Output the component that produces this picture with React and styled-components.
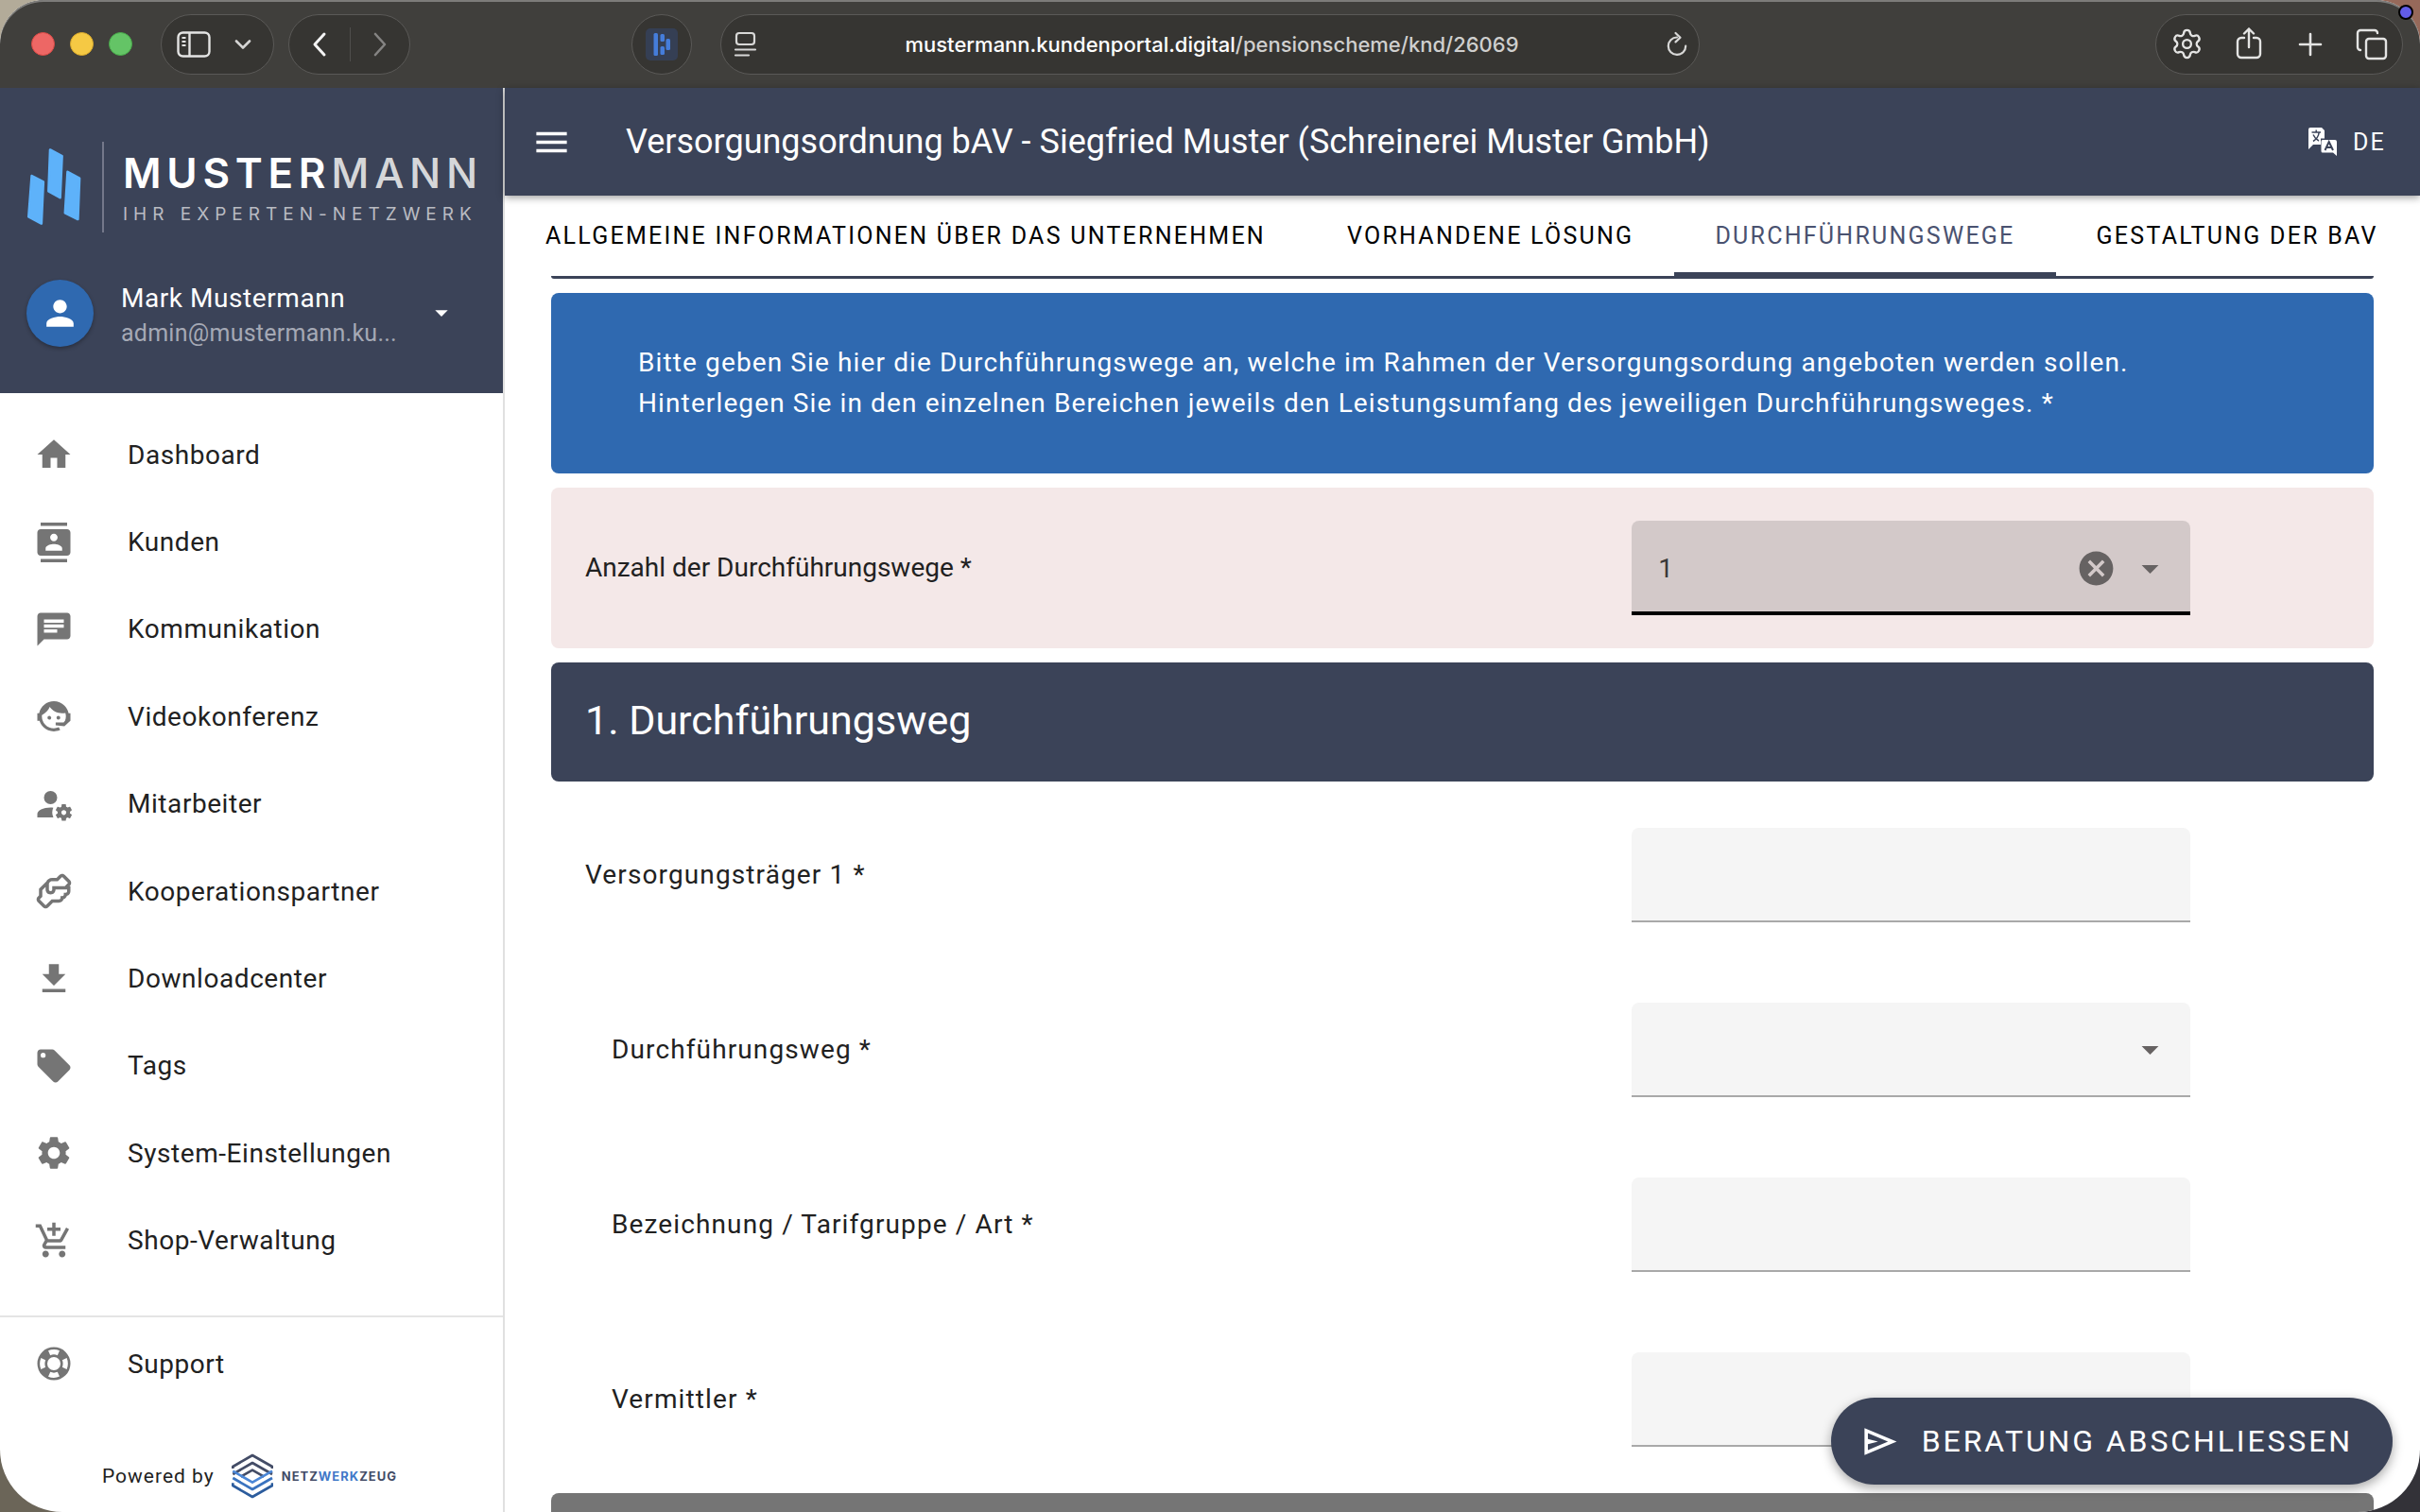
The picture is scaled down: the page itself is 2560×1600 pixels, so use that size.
import React, { useState } from "react";
import styled, { createGlobalStyle } from "styled-components";
import {
  MdAddShoppingCart,
  MdArrowDropDown,
  MdCancel,
  MdChat,
  MdContacts,
  MdHome,
  MdMenu,
  MdPerson,
  MdSettings,
} from "react-icons/md";
import { Copy, Settings } from "lucide-react";

const Icon = ({ d }) => (
  <svg viewBox="0 0 24 24" fill="currentColor" aria-hidden="true">
    <path d={d} />
  </svg>
);

const paths = {
  agent:
    "M18.72,14.76C19.07,13.91 19.26,13 19.26,12C19.26,11.28 19.15,10.59 18.96,9.95C18.31,10.1 17.63,10.18 16.92,10.18C13.86,10.18 11.15,8.67 9.5,6.34C8.61,8.5 6.91,10.26 4.77,11.22C4.73,11.47 4.73,11.74 4.73,12A7.27,7.27 0 0,0 12,19.27C13.05,19.27 14.06,19.04 14.97,18.63C15.54,19.72 15.8,20.26 15.78,20.26C14.14,20.81 12.87,21.08 12,21.08C9.58,21.08 7.27,20.13 5.57,18.42C4.53,17.38 3.76,16.11 3.33,14.73H2V10.18H3.09C3.93,6.04 7.6,2.92 12,2.92C14.4,2.92 16.71,3.87 18.42,5.58C19.69,6.84 20.54,8.45 20.89,10.18H22V14.67H22V14.69L22,14.73H21.94L18.38,18L13.08,17.4V15.73H17.91L18.72,14.76M9.27,11.77C9.57,11.77 9.86,11.89 10.07,12.11C10.28,12.32 10.4,12.61 10.4,12.91C10.4,13.21 10.28,13.5 10.07,13.71C9.86,13.92 9.57,14.04 9.27,14.04C8.64,14.04 8.13,13.54 8.13,12.91C8.13,12.28 8.64,11.77 9.27,11.77M14.72,11.77C15.35,11.77 15.85,12.28 15.85,12.91C15.85,13.54 15.35,14.04 14.72,14.04C14.09,14.04 13.58,13.54 13.58,12.91A1.14,1.14 0 0,1 14.72,11.77Z",
  accountCog:
    "M10 4A4 4 0 0 0 6 8A4 4 0 0 0 10 12A4 4 0 0 0 14 8A4 4 0 0 0 10 4M17 12C16.87 12 16.76 12.09 16.74 12.21L16.55 13.53C16.25 13.66 15.96 13.82 15.7 14L14.46 13.5C14.35 13.5 14.22 13.5 14.15 13.63L13.15 15.36C13.09 15.47 13.11 15.6 13.21 15.68L14.27 16.5C14.25 16.67 14.24 16.83 14.24 17C14.24 17.17 14.25 17.33 14.27 17.5L13.21 18.32C13.12 18.4 13.09 18.53 13.15 18.64L14.15 20.37C14.21 20.5 14.34 20.5 14.46 20.5L15.7 20C15.96 20.18 16.24 20.35 16.55 20.47L16.74 21.79C16.76 21.91 16.86 22 17 22H19C19.11 22 19.22 21.91 19.24 21.79L19.43 20.47C19.73 20.34 20 20.18 20.27 20L21.5 20.5C21.63 20.5 21.76 20.5 21.83 20.37L22.83 18.64C22.89 18.53 22.86 18.4 22.77 18.32L21.7 17.5C21.72 17.33 21.74 17.17 21.74 17C21.74 16.83 21.73 16.67 21.7 16.5L22.76 15.68C22.85 15.6 22.88 15.47 22.82 15.36L21.82 13.63C21.76 13.5 21.63 13.5 21.5 13.5L20.27 14C20 13.82 19.73 13.65 19.42 13.53L19.23 12.21C19.22 12.09 19.11 12 19 12H17M10 14C5.58 14 2 15.79 2 18V20H11.68A7 7 0 0 1 11 17A7 7 0 0 1 11.64 14.09C11.11 14.03 10.56 14 10 14M18 15.5C18.83 15.5 19.5 16.17 19.5 17C19.5 17.83 18.83 18.5 18 18.5C17.16 18.5 16.5 17.83 16.5 17C16.5 16.17 17.17 15.5 18 15.5Z",
  handshake:
    "M21.71 8.71C22.96 7.46 22.39 6 21.71 5.29L18.71 2.29C17.45 1.04 16 1.61 15.29 2.29L13.59 4H11C9.1 4 8 5 7.44 6.15L3 10.59V14.59L2.29 15.29C1.04 16.55 1.61 18 2.29 18.71L5.29 21.71C5.83 22.25 6.41 22.45 6.96 22.45C7.67 22.45 8.32 22.1 8.71 21.71L11.41 19H15C16.7 19 17.56 17.94 17.87 16.9C19 16.6 19.62 15.74 19.87 14.9C21.42 14.5 22 13.03 22 12V9H21.41L21.71 8.71M20 12C20 12.45 19.81 13 19 13L18 13L18 14C18 14.45 17.81 15 17 15L16 15L16 16C16 16.45 15.81 17 15 17H10.59L7.31 20.28C7 20.57 6.82 20.4 6.71 20.29L3.72 17.31C3.43 17 3.6 16.82 3.71 16.71L5 15.41V11.41L7 9.41V11C7 12.21 7.8 14 10 14S13 12.21 13 11H20V12M20.29 7.29L18.59 9H11V11C11 11.45 10.81 12 10 12S9 11.45 9 11V8C9 7.54 9.17 6 11 6H14.41L16.69 3.72C17 3.43 17.18 3.6 17.29 3.71L20.28 6.69C20.57 7 20.4 7.18 20.29 7.29Z",
  download: "M5,20H19V18H5M19,9H15V3H9V9H5L12,16L19,9Z",
  tag: "M5.5,7A1.5,1.5 0 0,1 4,5.5A1.5,1.5 0 0,1 5.5,4A1.5,1.5 0 0,1 7,5.5A1.5,1.5 0 0,1 5.5,7M21.41,11.58L12.41,2.58C12.05,2.22 11.55,2 11,2H4C2.89,2 2,2.89 2,4V11C2,11.55 2.22,12.05 2.59,12.41L11.58,21.41C11.95,21.77 12.45,22 13,22C13.55,22 14.05,21.77 14.41,21.41L21.41,14.41C21.78,14.05 22,13.55 22,13C22,12.44 21.77,11.94 21.41,11.58Z",
  lifebuoy:
    "M19.79,15.41C20.74,13.24 20.74,10.75 19.79,8.59L17.05,9.83C17.65,11.21 17.65,12.78 17.06,14.17L19.79,15.41M15.42,4.21C13.25,3.26 10.76,3.26 8.59,4.21L9.83,6.94C11.22,6.35 12.79,6.35 14.18,6.95L15.42,4.21M4.21,8.58C3.26,10.76 3.26,13.24 4.21,15.42L6.95,14.17C6.35,12.79 6.35,11.21 6.95,9.82L4.21,8.58M8.59,19.79C10.76,20.74 13.25,20.74 15.42,19.78L14.18,17.05C12.8,17.65 11.22,17.65 9.84,17.06L8.59,19.79M12,2A10,10 0 0,1 22,12A10,10 0 0,1 12,22A10,10 0 0,1 2,12A10,10 0 0,1 12,2M12,8A4,4 0 0,0 8,12A4,4 0 0,0 12,16A4,4 0 0,0 16,12A4,4 0 0,0 12,8Z",
  send: "M3 20V4L22 12L3 20M5 17L16.85 12L5 7V10.5L11 12L5 13.5V17Z",
};

const navItems = [
  { label: "Dashboard", icon: <MdHome /> },
  { label: "Kunden", icon: <MdContacts /> },
  { label: "Kommunikation", icon: <MdChat /> },
  { label: "Videokonferenz", icon: <Icon d={paths.agent} /> },
  { label: "Mitarbeiter", icon: <Icon d={paths.accountCog} /> },
  { label: "Kooperationspartner", icon: <Icon d={paths.handshake} /> },
  { label: "Downloadcenter", icon: <Icon d={paths.download} /> },
  { label: "Tags", icon: <Icon d={paths.tag} /> },
  { label: "System-Einstellungen", icon: <MdSettings /> },
  { label: "Shop-Verwaltung", icon: <MdAddShoppingCart /> },
];

const tabs = [
  "Allgemeine Informationen über das Unternehmen",
  "Vorhandene Lösung",
  "Durchführungswege",
  "Gestaltung der bAV",
];

const fields = [
  { id: "traeger", label: "Versorgungsträger 1 *" },
  { id: "weg", label: "Durchführungsweg *", indent: true, select: true },
  { id: "tarif", label: "Bezeichnung / Tarifgruppe / Art *", indent: true },
  { id: "vermittler", label: "Vermittler *", indent: true },
];

const BrowserBar = () => (
  <Bar>
    <BarSide>
      <Lights>
        <Light $color="#ed6765" $ring="#d94a46" />
        <Light $color="#f5c944" $ring="#d9a92c" />
        <Light $color="#64c466" $ring="#48a94a" />
      </Lights>
      <Pill>
        <PillButton $width={68} aria-label="Seitenleiste">
          <svg width="36" height="28" viewBox="0 0 36 28" fill="none" stroke="#e4e4e3" strokeWidth="2.4">
            <rect x="1.5" y="1.5" width="33" height="25" rx="5" />
            <path d="M13.5 1.5v25" />
            <path d="M5.5 7h4M5.5 11h4M5.5 15h4" strokeWidth="1.8" />
          </svg>
        </PillButton>
        <PillButton $width={50} aria-label="Tabgruppen">
          <svg width="36" height="28" viewBox="0 0 36 28" fill="none" stroke="#d5d5d4" strokeWidth="2.6" strokeLinecap="round" strokeLinejoin="round">
            <path d="M4 10.5l7 7 7-7" />
          </svg>
        </PillButton>
      </Pill>
      <Pill>
        <PillButton $width={64} aria-label="Zurück">
          <svg width="16" height="28" viewBox="0 0 16 28" fill="none" stroke="#f4f4f4" strokeWidth="3" strokeLinecap="round" strokeLinejoin="round">
            <path d="M13 3L3 14l10 11" />
          </svg>
        </PillButton>
        <PillDivider />
        <PillButton $width={62} aria-label="Vorwärts">
          <svg width="16" height="28" viewBox="0 0 16 28" fill="none" stroke="#858483" strokeWidth="2.6" strokeLinecap="round" strokeLinejoin="round">
            <path d="M3 3l10 11L3 25" />
          </svg>
        </PillButton>
      </Pill>
      <ExtensionPill>
        <PillButton $width={62} aria-label="Erweiterung">
          <svg width="34" height="34" viewBox="0 0 34 34">
            <rect width="34" height="34" rx="5" fill="#353f54" />
            <g fill="#457ddb">
              <rect x="8.5" y="5" width="4.5" height="24" rx="1.5" />
              <rect x="15.5" y="6" width="4.5" height="8" rx="1.5" />
              <rect x="15.5" y="19" width="4.5" height="9" rx="1.5" />
              <rect x="21.5" y="11" width="4.5" height="12" rx="1.5" />
            </g>
          </svg>
        </PillButton>
      </ExtensionPill>
    </BarSide>
    <AddressPill>
      <svg width="26" height="28" viewBox="0 0 26 28" fill="none" stroke="#d8d8d7" strokeWidth="2.2" strokeLinecap="round">
        <rect x="3" y="2" width="19" height="12" rx="3" />
        <path d="M2 19.5h21M2 25.5h14" />
      </svg>
      <Address>
        mustermann.kundenportal.digital<span>/pensionscheme/knd/26069</span>
      </Address>
      <svg width="24" height="28" viewBox="0 0 24 28" fill="none" stroke="#d8d8d7" strokeWidth="2.2" strokeLinecap="round" strokeLinejoin="round">
        <path d="M12 6.5A9.2 9.2 0 1 0 21.2 15.7" />
        <path d="M10.5 2l5 4.7-5 4.7" />
      </svg>
    </AddressPill>
    <BarSide>
      <ToolsPill>
        <PillButton $width={65} aria-label="Einstellungen">
          <Settings size={35} strokeWidth={1.6} />
        </PillButton>
        <PillButton $width={65} aria-label="Teilen">
          <svg width="28" height="36" viewBox="0 0 28 36" fill="none" stroke="currentColor" strokeWidth="2.4" strokeLinecap="round" strokeLinejoin="round">
            <path d="M9 11H6a4 4 0 0 0-4 4v13a4 4 0 0 0 4 4h16a4 4 0 0 0 4-4V15a4 4 0 0 0-4-4h-3" />
            <path d="M14 21V1.5M9 6.5l5-5 5 5" />
          </svg>
        </PillButton>
        <PillButton $width={65} aria-label="Neuer Tab">
          <svg width="26" height="26" viewBox="0 0 26 26" fill="none" stroke="currentColor" strokeWidth="2.6" strokeLinecap="round">
            <path d="M13 2v22M2 13h22" />
          </svg>
        </PillButton>
        <PillButton $width={65} aria-label="Tabübersicht">
          <Copy size={36} strokeWidth={1.6} />
        </PillButton>
      </ToolsPill>
    </BarSide>
  </Bar>
);

const Sidebar = () => (
  <Aside>
    <Profile>
      <Brand>
        <svg width="58" height="84" viewBox="52 76 176 252" fill="#5eb2fa" stroke="#5eb2fa" strokeWidth="8" strokeLinejoin="round">
          <path d="M69 166L106 185L100 319L59 297Z" />
          <path d="M128 82L166 102L160 236L123 215Z" />
          <path d="M184 153L222 174L217 305L176 285Z" />
        </svg>
        <BrandText>
          <BrandName>
            MUSTER<span>MANN</span>
          </BrandName>
          <BrandClaim>IHR EXPERTEN-NETZWERK</BrandClaim>
        </BrandText>
      </Brand>
      <Account>
        <Avatar>
          <MdPerson />
        </Avatar>
        <AccountText>
          <AccountName>Mark Mustermann</AccountName>
          <AccountMail>admin@mustermann.ku...</AccountMail>
        </AccountText>
        <MdArrowDropDown />
      </Account>
    </Profile>
    <Nav>
      {navItems.map(({ label, icon }) => (
        <NavLink href="#" key={label}>
          {icon}
          {label}
        </NavLink>
      ))}
    </Nav>
    <AsideFooter>
      <NavLink href="#">
        <Icon d={paths.lifebuoy} />
        Support
      </NavLink>
      <Powered>
        Powered by
        <svg width="44" height="48" viewBox="-1 -1 132 142" fill="none" strokeWidth="8" strokeLinejoin="round">
          <path d="M3 46V40L65 4L128 40V46" stroke="#434c66" />
          <path d="M3 64L65 28L128 64" stroke="#434c66" />
          <path d="M28 72L65 51L102 72" stroke="#434c66" />
          <path d="M3 54L65 90L128 54" stroke="#4a86d6" />
          <path d="M3 76L65 112L128 76" stroke="#3a73bf" />
          <path d="M3 92V100L65 136L128 100V92" stroke="#2c5c9d" />
        </svg>
        <PoweredName>
          NETZ<span>WERK</span>ZEUG
        </PoweredName>
      </Powered>
    </AsideFooter>
  </Aside>
);

const App = () => {
  const [activeTab, setActiveTab] = useState(2);
  const [count, setCount] = useState("1");

  return (
    <Desktop>
      <GlobalStyle />
      <Window>
        <BrowserBar />
        <Page>
          <Sidebar />
          <Main>
            <Toolbar>
              <IconButton aria-label="Menü">
                <MdMenu />
              </IconButton>
              <Title>Versorgungsordnung bAV - Siegfried Muster (Schreinerei Muster GmbH)</Title>
              <Language>
                <svg viewBox="0 0 32 32" width="32" height="32" aria-hidden="true">
                  <path fill="#fff" d="M3 1H15L18 4V12.5H14V19H6L1 24V3Q1 1 3 1Z" />
                  <path fill="#fff" d="M16 14H29Q31 14 31 16V31L27 27.5H16Q14.5 27.5 14.5 26V16Q14.5 14 16 14Z" />
                  <g fill="none" stroke="#3b4358" strokeWidth="1.5">
                    <path d="M4.5 6H14M9.2 3.5V6M6 15.5Q11.5 12 12.2 6M6 8.5Q8 13 12 15" />
                    <path d="M18.5 25L22.7 16L27 25M20 22H25.5" strokeWidth="2" />
                  </g>
                </svg>
                DE
              </Language>
            </Toolbar>
            <Tabs role="tablist">
              {tabs.map((tab, i) => (
                <Tab
                  key={tab}
                  role="tab"
                  aria-selected={i === activeTab}
                  $active={i === activeTab}
                  onClick={() => setActiveTab(i)}
                >
                  {tab}
                </Tab>
              ))}
            </Tabs>
            <Content>
              <CardEdge />
              <Notice>
                Bitte geben Sie hier die Durchführungswege an, welche im Rahmen der Versorgungsordung angeboten
                werden sollen.
                <br />
                Hinterlegen Sie in den einzelnen Bereichen jeweils den Leistungsumfang des jeweiligen
                Durchführungsweges. *
              </Notice>
              <CountRow>
                <Label htmlFor="anzahl" $plain>
                  Anzahl der Durchführungswege *
                </Label>
                <FieldCell>
                  <Field $focused>
                    <Select id="anzahl" value={count} onChange={(e) => setCount(e.target.value)}>
                      <option value=""></option>
                      <option>1</option>
                      <option>2</option>
                      <option>3</option>
                    </Select>
                    <FieldIcons>
                      <ClearButton aria-label="Leeren" onClick={() => setCount("")}>
                        <MdCancel />
                      </ClearButton>
                      <MdArrowDropDown />
                    </FieldIcons>
                  </Field>
                </FieldCell>
              </CountRow>
              <SectionHeader>1. Durchführungsweg</SectionHeader>
              <FieldList>
                {fields.map(({ id, label, indent, select }) => (
                  <FieldRow key={id}>
                    <Label htmlFor={id} $indent={indent}>
                      {label}
                    </Label>
                    <FieldCell>
                      <Field>
                        {select ? (
                          <>
                            <Select id={id} />
                            <FieldIcons>
                              <MdArrowDropDown />
                            </FieldIcons>
                          </>
                        ) : (
                          <Input id={id} />
                        )}
                      </Field>
                    </FieldCell>
                  </FieldRow>
                ))}
              </FieldList>
              <NextHeader />
            </Content>
          </Main>
        </Page>
        <FinishButton>
          <Icon d={paths.send} />
          Beratung abschliessen
        </FinishButton>
      </Window>
      <Indicator />
    </Desktop>
  );
};

const GlobalStyle = createGlobalStyle`
  * {
    box-sizing: border-box;
  }

  body {
    margin: 0;
    font-family: Roboto, "Liberation Sans", sans-serif;
    font-size: 28px;
    color: #212121;
  }

  button, input, select {
    margin: 0;
    padding: 0;
    border: 0;
    background: none;
    font: inherit;
    color: inherit;
    outline: none;
  }

  button {
    cursor: pointer;
  }

  svg {
    display: block;
    flex: none;
  }
`;

const Desktop = styled.div`
  position: relative;
  height: 100vh;
  background: linear-gradient(to right, transparent 50%, #96695a 50%) top / 100% 50% no-repeat,
    linear-gradient(to right, #6b6558 50%, #333238 50%) bottom / 100% 50% no-repeat, #b3ab99;
`;

const Window = styled.div`
  position: relative;
  display: flex;
  flex-direction: column;
  height: 100%;
  border-radius: 46px 46px 66px 66px;
  background: #fff;
  overflow: hidden;
`;

const Indicator = styled.span`
  position: absolute;
  top: 5px;
  right: 7px;
  width: 16px;
  height: 16px;
  border: 2px solid #000;
  border-radius: 50%;
  background: #625ce8;
`;

/* browser chrome */

const Bar = styled.header`
  display: flex;
  align-items: center;
  flex: none;
  height: 93px;
  border-radius: 46px 46px 0 0;
  background: #403f3c;
  box-shadow: inset 0 2px 0 #7d7c7a;
`;

const BarSide = styled.div`
  display: flex;
  align-items: center;
  flex: 1 1 0;
  min-width: 0;
`;

const Lights = styled.div`
  display: flex;
  gap: 16px;
  margin: 0 30px 0 33px;
`;

const Light = styled.span`
  width: 25px;
  height: 25px;
  border: 1px solid ${({ $ring }) => $ring};
  border-radius: 50%;
  background: ${({ $color }) => $color};
`;

const Pill = styled.div`
  display: flex;
  align-items: center;
  flex: none;
  height: 64px;
  margin-right: 15px;
  border: 1px solid #5a5957;
  border-radius: 32px;
  background: #363532;
  color: #e4e4e3;
`;

const ExtensionPill = styled(Pill)`
  margin: 0 30px 0 auto;
`;

const ToolsPill = styled(Pill)`
  margin: 0 18px 0 auto;
`;

const AddressPill = styled(Pill)`
  flex: 0 1 1036px;
  margin: 0;
  padding: 0 11px 0 13px;
`;

const PillButton = styled.button`
  display: flex;
  align-items: center;
  justify-content: center;
  width: ${({ $width }) => $width}px;
  height: 100%;
`;

const PillDivider = styled.span`
  width: 1px;
  height: 36px;
  background: #4f4e4c;
`;

const Address = styled.span`
  flex: 1;
  overflow: hidden;
  font-family: Inter, Roboto, sans-serif;
  font-size: 22px;
  font-weight: 500;
  text-align: center;
  white-space: nowrap;
  color: #fff;

  span {
    color: #cfcfce;
  }
`;

/* sidebar */

const Page = styled.div`
  display: flex;
  flex: 1;
  min-height: 0;
`;

const Aside = styled.aside`
  display: flex;
  flex-direction: column;
  flex: none;
  width: 534px;
  border-right: 2px solid #e0e0e0;
`;

const Profile = styled.div`
  height: 323px;
  background: #3b4358;
  color: #fff;
`;

const Brand = styled.div`
  display: flex;
  align-items: center;
  padding: 57px 0 0 28px;
`;

const BrandText = styled.div`
  display: flex;
  flex-direction: column;
  justify-content: center;
  gap: 10px;
  height: 96px;
  margin-left: 22px;
  padding: 3px 0 0 20px;
  border-left: 2px solid #74788a;
  font-family: Inter, Roboto, sans-serif;
  white-space: nowrap;
`;

const BrandName = styled.span`
  font-size: 44px;
  font-weight: 600;
  line-height: 44px;
  letter-spacing: 0.13em;

  span {
    font-weight: 500;
    color: #d6d7d9;
  }
`;

const BrandClaim = styled.span`
  font-size: 19px;
  line-height: 24px;
  letter-spacing: 6px;
  color: #b9bbc2;
`;

const Account = styled.button`
  display: flex;
  align-items: center;
  width: 100%;
  margin-top: 45px;
  padding-left: 28px;
  text-align: left;

  > svg {
    width: 32px;
    height: 32px;
  }
`;

const Avatar = styled.span`
  display: flex;
  align-items: center;
  justify-content: center;
  width: 71px;
  height: 71px;
  margin-right: 29px;
  border-radius: 50%;
  background: #2f69b0;
  box-shadow: 0 2px 4px rgba(0, 0, 0, 0.3);

  svg {
    width: 43px;
    height: 43px;
  }
`;

const AccountText = styled.span`
  width: 323px;
  padding-top: 6px;
`;

const AccountName = styled.span`
  display: block;
  line-height: 38px;
  letter-spacing: 0.02em;
`;

const AccountMail = styled.span`
  display: block;
  font-size: 25px;
  line-height: 36px;
  letter-spacing: 0.01em;
  color: #a5a9b5;
`;

const Nav = styled.nav`
  display: grid;
  flex: 1;
  grid-auto-rows: 1fr;
  padding: 19px 0 33px;
`;

const NavLink = styled.a`
  display: flex;
  align-items: center;
  padding-left: 36px;
  letter-spacing: 0.02em;
  color: #212121;
  text-decoration: none;

  svg {
    width: 42px;
    height: 42px;
    margin-right: 57px;
    color: #757575;
  }
`;

const AsideFooter = styled.div`
  height: 208px;
  padding-top: 3px;
  border-top: 2px solid #e4e4e4;

  ${NavLink} {
    height: 92px;
  }
`;

const Powered = styled.div`
  display: flex;
  align-items: center;
  height: 48px;
  margin: 49px 0 0 108px;
  font-size: 21px;
  letter-spacing: 1px;

  svg {
    margin: 0 9px 0 18px;
  }
`;

const PoweredName = styled.span`
  font-family: Inter, Roboto, sans-serif;
  font-size: 13px;
  font-weight: 700;
  color: #434c66;

  span {
    color: #3f78c8;
  }
`;

/* main area */

const Main = styled.main`
  display: flex;
  flex: 1;
  flex-direction: column;
  min-width: 0;
`;

const Toolbar = styled.div`
  position: relative;
  z-index: 1;
  display: flex;
  align-items: center;
  flex: none;
  height: 114px;
  padding: 0 36px 0 28px;
  background: #3b4358;
  box-shadow: 0 2px 8px rgba(0, 0, 0, 0.4);
  color: #fff;
`;

const IconButton = styled.button`
  svg {
    width: 43px;
    height: 43px;
  }
`;

const Title = styled.h1`
  flex: 1;
  margin: 0 0 0 57px;
  overflow: hidden;
  font-size: 36px;
  font-weight: 400;
  white-space: nowrap;
`;

const Language = styled.button`
  display: flex;
  align-items: center;
  gap: 16px;
  font-size: 25px;
  letter-spacing: 0.09em;
`;

const Tabs = styled.div`
  display: flex;
  flex: none;
  height: 85px;
  overflow: hidden;
`;

const Tab = styled.button`
  flex: none;
  padding: 0 43px;
  font-size: 25px;
  letter-spacing: 0.09em;
  text-transform: uppercase;
  white-space: nowrap;
  color: ${({ $active }) => ($active ? "#4a5270" : "#000")};
  box-shadow: ${({ $active }) => ($active ? "inset 0 -4px 0 #3b4358" : "none")};
`;

const Content = styled.div`
  flex: 1;
  min-height: 0;
  padding: 0 49px;
  overflow: hidden;
`;

const CardEdge = styled.div`
  height: 3px;
  border-radius: 0 0 8px 8px;
  background: #3b4358;
`;

const Notice = styled.p`
  margin: 15px 0;
  padding: 52px 92px 53px;
  border-radius: 8px;
  background: #2f69b0;
  line-height: 43px;
  letter-spacing: 0.04em;
  color: #fff;
`;

const FieldRow = styled.div`
  display: grid;
  grid-template-columns: 7fr 4fr 1fr;
  align-items: center;
  height: 185px;
  padding: 0 15px;
`;

const CountRow = styled(FieldRow)`
  height: 170px;
  border-radius: 8px;
  background: #f4e8e8;
`;

const Label = styled.label`
  padding-bottom: 1px;
  padding-left: ${({ $indent }) => ($indent ? 49 : 21)}px;
  letter-spacing: ${({ $plain }) => ($plain ? "normal" : "0.04em")};
`;

const FieldCell = styled.div`
  padding: 0 21px;
`;

const Field = styled.div`
  position: relative;
  display: flex;
  height: 100px;
  border-radius: 8px 8px 0 0;
  background: ${({ $focused }) => ($focused ? "#d3c9c9" : "#f5f5f5")};

  &::after {
    content: "";
    position: absolute;
    right: 0;
    bottom: 0;
    left: 0;
    border-bottom: ${({ $focused }) => ($focused ? "4px solid #000" : "2px solid #a9a9a9")};
  }
`;

const Select = styled.select`
  flex: 1;
  padding-left: 28px;
  appearance: none;
  color: #3a3838;
`;

const Input = styled.input`
  flex: 1;
  min-width: 0;
  padding: 0 28px;
`;

const FieldIcons = styled.div`
  position: absolute;
  top: 0;
  right: 21px;
  display: flex;
  align-items: center;
  gap: 14px;
  height: 100%;
  color: #666262;
  pointer-events: none;

  svg {
    width: 43px;
    height: 43px;
  }
`;

const ClearButton = styled.button`
  pointer-events: auto;
`;

const SectionHeader = styled.h2`
  display: flex;
  align-items: center;
  height: 126px;
  margin: 15px 0 0;
  padding: 0 36px 4px;
  border-radius: 8px;
  background: #3b4358;
  font-size: 43px;
  font-weight: 400;
  color: #fff;
`;

const FieldList = styled.div`
  padding: 6px 0 7px;
`;

const NextHeader = styled.div`
  height: 126px;
  border-radius: 8px;
  background: #757575;
`;

const FinishButton = styled.button`
  position: absolute;
  right: 29px;
  bottom: 29px;
  display: flex;
  align-items: center;
  gap: 23px;
  height: 92px;
  padding: 0 42px 0 30px;
  border-radius: 46px;
  background: #3b4358;
  box-shadow: 0 4px 12px rgba(0, 0, 0, 0.35);
  font-size: 32px;
  letter-spacing: 0.09em;
  text-transform: uppercase;
  color: #fff;

  svg {
    width: 43px;
    height: 43px;
  }
`;

export default App;
